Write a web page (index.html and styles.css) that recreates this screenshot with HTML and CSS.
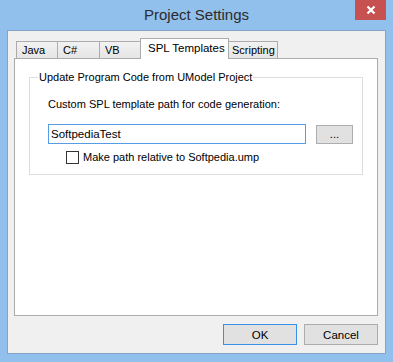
FILE: index.html
```html
<!DOCTYPE html>
<html lang="en">

<head>
  <meta charset="UTF-8">
  <title>Project Settings</title>
  <link rel="stylesheet" href="styles.css">
</head>

<body>
  <div class="window">
    <div class="titlebar">
      <span class="title">Project Settings</span>
      <button class="close" type="button">
        <svg width="10" height="10" viewBox="0 0 10 10">
          <path d="M1.5 1.5 L8.5 8.5 M8.5 1.5 L1.5 8.5" stroke="#fff" stroke-width="2.2" />
        </svg>
      </button>
    </div>

    <div class="client">
      <div class="tabs">
        <div class="tab java">Java</div>
        <div class="tab csharp">C#</div>
        <div class="tab vb">VB</div>
        <div class="tab active">SPL Templates</div>
        <div class="tab scripting">Scripting</div>
      </div>

      <div class="panel">
        <fieldset class="group">
          <legend>Update Program Code from UModel Project</legend>
          <div class="label">Custom SPL template path for code generation:</div>
          <div class="path-row">
            <input class="path" value="SoftpediaTest" />
            <button class="btn browse" type="button">...</button>
          </div>
          <label class="check">
            <span class="box"></span>
            Make path relative to Softpedia.ump
          </label>
        </fieldset>
      </div>

      <div class="footer">
        <button class="btn default" type="button">OK</button>
        <button class="btn" type="button">Cancel</button>
      </div>
    </div>
  </div>
</body>

</html>
```

FILE: styles.css
```css
body {
  margin: 0;
  font-family: "Liberation Sans", Arial, sans-serif;
  font-size: 11px;
  color: #000;
}

.window {
  width: 393px;
  height: 362px;
  box-sizing: border-box;
  background-color: #91c0ec;
  padding: 0 7px 8px 7px;
  display: flex;
  flex-direction: column;
}

.titlebar {
  height: 30px;
  display: flex;
  align-items: flex-start;
  position: relative;
}

.title {
  flex: 1;
  text-align: center;
  font-size: 15px;
  line-height: 30px;
  color: #2b2b2b;
}

.close {
  position: absolute;
  right: 0;
  top: 0;
  width: 31px;
  height: 20px;
  border: none;
  padding: 0;
  background-color: #c75050;
  display: flex;
  align-items: center;
  justify-content: center;
}

.client {
  flex: 1;
  background-color: #f0f0f0;
  border: 1px solid #83a3c7;
  display: flex;
  flex-direction: column;
  padding: 7px 7px 8px 6px;
}

.tabs {
  height: 20px;
  display: flex;
  align-items: flex-end;
  padding-left: 2px;
}

.tab {
  box-sizing: border-box;
  height: 17px;
  border: 1px solid #acacac;
  border-bottom: none;
  margin-left: -1px;
  background: linear-gradient(#f2f2f2, #e5e5e5);
  padding: 0 5px;
  line-height: 17px;
  white-space: nowrap;
}

.java {
  width: 42px;
  margin-left: 0;
}

.csharp {
  width: 43px;
}

.vb {
  width: 42px;
}

.tab.active {
  width: 89px;
  height: 21px;
  margin-bottom: -1px;
  background: #fff;
  position: relative;
  z-index: 1;
  padding: 0 7px;
  line-height: 19px;
  font-size: 11.5px;
}

.scripting {
  width: 50px;
  padding: 0 3px;
}

.panel {
  flex: 1;
  background-color: #fff;
  border: 1px solid #acacac;
}

.group {
  margin: 11px 14px 0 14px;
  height: 103px;
  border: 1px solid #dcdcdc;
  padding: 0 0 0 18px;
}

.group legend {
  padding: 0 1px;
  margin-left: -10px;
  line-height: 15px;
}

.label {
  margin-top: 12px;
  line-height: 15px;
}

.path-row {
  display: flex;
  align-items: center;
  margin-top: 12px;
}

.path {
  width: 258px;
  height: 20px;
  box-sizing: border-box;
  border: 1px solid #569de5;
  padding: 0 2px;
  font-family: inherit;
  font-size: 11.5px;
  outline: none;
}

.btn {
  box-sizing: border-box;
  border: 1px solid #adadad;
  background-color: #e1e1e1;
  font-family: inherit;
  font-size: 11.5px;
  padding: 0;
  color: #000;
}

.browse {
  width: 37px;
  height: 19px;
  margin-left: 10px;
}

.check {
  display: flex;
  align-items: center;
  margin-top: 6px;
  margin-left: 18px;
  line-height: 15px;
}

.box {
  width: 13px;
  height: 13px;
  box-sizing: border-box;
  border: 1px solid #333;
  background-color: #fff;
  margin-right: 4px;
}

.footer {
  display: flex;
  justify-content: flex-end;
  gap: 7px;
  margin-top: 8px;
}

.footer .btn {
  width: 74px;
  height: 21px;
}

.footer .default {
  border-color: #3c8fe8;
}
```
